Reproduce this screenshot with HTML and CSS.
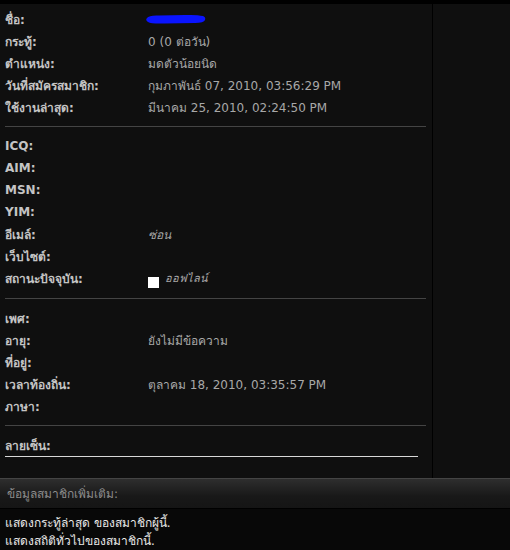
FILE: index.html
```html
<!DOCTYPE html>
<html>
<head>
<meta charset="utf-8">
<link rel="stylesheet" href="styles.css">
</head>
<body>
<div class="page">
  <div class="main">
    <div class="left">
      <div class="section">
        <div class="row"><span class="label">ชื่อ:</span><span class="value"><svg class="scribble" width="62" height="12" viewBox="0 0 62 12"><path d="M2 5 Q4 2 14 2.5 L40 2 Q52 1.5 58 3 Q61 4 60 7 Q59 10 50 10 L20 10.5 Q6 11 3 9 Q0 7 2 5 Z" fill="#0a14ff"/></svg></span></div>
        <div class="row"><span class="label">กระทู้:</span><span class="value">0 (0 ต่อวัน)</span></div>
        <div class="row"><span class="label">ตำแหน่ง:</span><span class="value">มดตัวน้อยนิด</span></div>
        <div class="row"><span class="label">วันที่สมัครสมาชิก:</span><span class="value">กุมภาพันธ์ 07, 2010, 03:56:29 PM</span></div>
        <div class="row"><span class="label">ใช้งานล่าสุด:</span><span class="value">มีนาคม 25, 2010, 02:24:50 PM</span></div>
      </div>
      <hr class="divider">
      <div class="section">
        <div class="row"><span class="label">ICQ:</span><span class="value"></span></div>
        <div class="row"><span class="label">AIM:</span><span class="value"></span></div>
        <div class="row"><span class="label">MSN:</span><span class="value"></span></div>
        <div class="row"><span class="label">YIM:</span><span class="value"></span></div>
        <div class="row"><span class="label">อีเมล์:</span><span class="value italic">ซ่อน</span></div>
        <div class="row"><span class="label">เว็บไซต์:</span><span class="value"></span></div>
        <div class="row tall"><span class="label">สถานะปัจจุบัน:</span><span class="value status"><span class="box"></span><span class="offline">ออฟไลน์</span></span></div>
      </div>
      <hr class="divider">
      <div class="section">
        <div class="row"><span class="label">เพศ:</span><span class="value"></span></div>
        <div class="row"><span class="label">อายุ:</span><span class="value">ยังไม่มีข้อความ</span></div>
        <div class="row"><span class="label">ที่อยู่:</span><span class="value"></span></div>
        <div class="row"><span class="label">เวลาท้องถิ่น:</span><span class="value">ตุลาคม 18, 2010, 03:35:57 PM</span></div>
        <div class="row"><span class="label">ภาษา:</span><span class="value"></span></div>
      </div>
      <hr class="divider">
      <div class="section">
        <div class="row"><span class="label">ลายเซ็น:</span><span class="value"></span></div>
      </div>
      <div class="sigline"></div>
    </div>
    <div class="right"></div>
  </div>
  <div class="catbar">ข้อมูลสมาชิกเพิ่มเติม:</div>
  <div class="links">
    <div>แสดงกระทู้ล่าสุด ของสมาชิกผู้นี้.</div>
    <div>แสดงสถิติทั่วไปของสมาชิกนี้.</div>
  </div>
</div>
</body>
</html>
```
FILE: styles.css
```css
html, body {
  margin: 0;
  padding: 0;
  background: #080808;
}
.page {
  width: 510px;
  height: 550px;
  overflow: hidden;
  font-family: "DejaVu Sans", "Noto Sans", sans-serif;
  font-size: 12px;
  border-top: 4px solid #000;
  box-sizing: border-box;
}
.main {
  display: flex;
  height: 474px;
  background: #0f0f0f;
}
.left {
  width: 433px;
  border-right: 1px solid #000;
  padding: 4px 6px 0 5px;
  box-sizing: border-box;
}
.right {
  flex: 1;
}
.row {
  display: grid;
  grid-template-columns: 143px 1fr;
  height: 22px;
  align-items: center;
}
.row.tall {
  height: 23px;
}
.label {
  color: #c4c4c4;
  font-weight: bold;
}
.value {
  color: #a8a8a8;
  white-space: nowrap;
}
.italic {
  font-style: italic;
}
.scribble {
  display: block;
  margin-left: -3px;
}
.status {
  display: flex;
  align-items: center;
  gap: 6px;
}
.box {
  width: 11px;
  height: 11px;
  background: #fff;
  margin-top: 8px;
}
.offline {
  font-style: italic;
  font-size: 11px;
  margin-bottom: 2px;
}
.divider {
  border: 0;
  border-top: 1px solid #444;
  margin: 8px 0;
}
.sigline {
  width: 413px;
  height: 1px;
  background: #d8d8d8;
}
.catbar {
  height: 31px;
  box-sizing: border-box;
  border-top: 1px solid #444;
  border-bottom: 1px solid #000;
  background: linear-gradient(#2e2e2e, #181818 60%, #151515);
  color: #8c8c8c;
  padding-left: 7px;
  line-height: 31px;
}
.links {
  color: #e8e8e8;
  padding: 5px 5px 0;
  line-height: 18px;
}
```
